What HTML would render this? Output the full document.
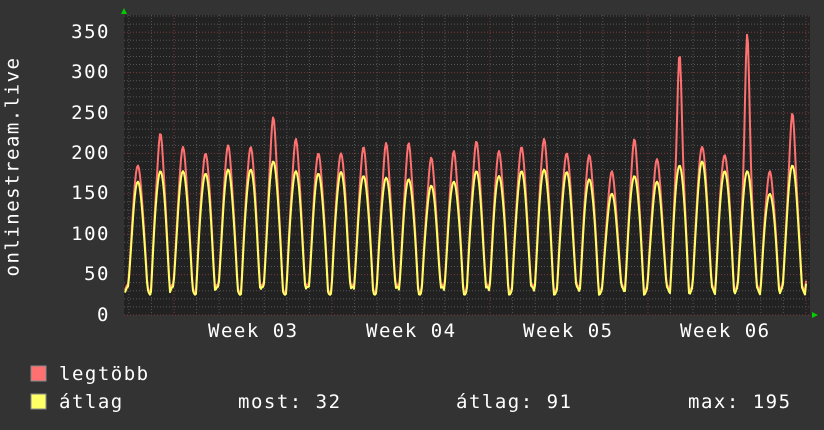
<!DOCTYPE html><html><head><style>
body{margin:0;width:824px;height:430px;background:#333;overflow:hidden;font-family:"DejaVu Sans Mono","Liberation Mono",monospace;color:#fff}
.t{position:absolute;font-size:19px;letter-spacing:1.5px;white-space:pre;line-height:1}
.n{position:absolute;font-size:19px;letter-spacing:1.5px;line-height:1;width:110px;left:0;text-align:right}
</style></head><body>
<svg width="824" height="430" style="position:absolute;left:0;top:0" id="s">
<rect x="124" y="15" width="686" height="300" fill="#222"/>
<g id="grid"></g>
<polyline id="r" fill="none" stroke="#ff7070" stroke-width="2" stroke-linejoin="round"/>
<polyline id="y" fill="none" stroke="#ffff66" stroke-width="2" stroke-linejoin="round"/>
<polygon points="121,14 127,14 124,8" fill="#0c0"/>
<polygon points="812,312 812,318 818,315" fill="#0c0"/>
<rect x="31" y="366" width="15" height="15" fill="#ff7070" stroke="#888" stroke-width="1"/>
<rect x="31" y="394" width="15" height="15" fill="#ffff66" stroke="#888" stroke-width="1"/>
</svg>
<div class="n" style="top:23px">350</div>
<div class="n" style="top:63px">300</div>
<div class="n" style="top:104px">250</div>
<div class="n" style="top:144px">200</div>
<div class="n" style="top:184px">150</div>
<div class="n" style="top:225px">100</div>
<div class="n" style="top:265px">50</div>
<div class="n" style="top:306px">0</div>
<div class="t" style="left:208px;top:322px">Week 03</div>
<div class="t" style="left:366px;top:322px">Week 04</div>
<div class="t" style="left:523px;top:322px">Week 05</div>
<div class="t" style="left:680px;top:322px">Week 06</div>
<div class="t" style="left:-107px;top:157px;transform:rotate(-90deg);width:240px;text-align:center">onlinestream.live</div>
<div class="t" style="left:59px;top:365px">legtöbb</div>
<div class="t" style="left:59px;top:393px">átlag</div>
<div class="t" style="left:238px;top:393px">most: 32</div>
<div class="t" style="left:456px;top:393px">átlag: 91</div>
<div class="t" style="left:688px;top:393px">max: 195</div>
<script>
var g=document.getElementById('grid'),h='';
for(var v=0;v<=370;v+=10){var y=315-v*0.808;h+='<line x1="124" x2="810" y1="'+y+'" y2="'+y+'" stroke="'+(v%50==0?'#7a3a3a':'#555')+'" stroke-dasharray="1,2"/>';}
for(var d=-3;d<30;d++){var x=174+d*22.57;if(x<125||x>810)continue;var w=((d%7)+7)%7==0;h+='<line x1="'+x+'" x2="'+x+'" y1="15" y2="315" stroke="'+(w?'#7a3a3a':'#555')+'" stroke-dasharray="1,2"/>';}
g.innerHTML=h;
var rp=[172,212,195,187,197,195,232,205,187,187,195,200,200,182,190,202,190,195,205,187,185,165,205,180,310,195,185,335,165,237];
var yp=[165,178,178,175,180,180,190,178,175,177,172,170,168,160,165,178,172,178,180,177,168,150,172,165,185,190,178,178,150,185];
var R=[],Y=[];
for(var x=125;x<=806;x++){var t=(x-126)/22.57;var d=Math.floor(t);var f=t-d;if(d<0){d=0}if(d>29)d=29;
var s=Math.max(0,Math.sin(Math.PI*(f-0.1)/0.85));var k=f>0.1&&f<0.95?Math.pow(s,1.1):0;
var mn=30+5*Math.sin(x*0.7);
var yv=mn+(yp[d]-mn)*k;var rv=yv+(rp[d]-yp[d])*Math.pow(k,8)+10*k+3;
R.push(x+','+(315-rv*0.808).toFixed(1));Y.push(x+','+(315-yv*0.808).toFixed(1));}
document.getElementById('r').setAttribute('points',R.join(' '));
document.getElementById('y').setAttribute('points',Y.join(' '));
</script>
</body></html>
